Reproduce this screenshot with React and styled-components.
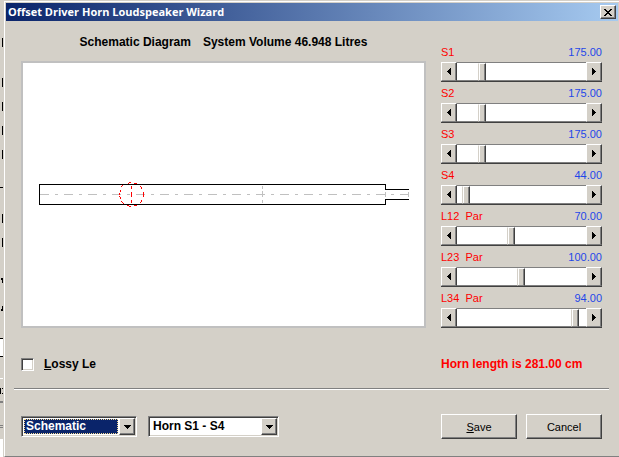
import React, { useState } from "react";
import styled, { createGlobalStyle } from "styled-components";

const GlobalStyle = createGlobalStyle`
  * {
    box-sizing: border-box;
  }
  body {
    margin: 0;
    background-color: #d4d0c8;
    color: #000;
    font-family: "Liberation Sans", Arial, sans-serif;
    font-size: 11px;
  }
`;

const Desktop = styled.div`
  display: flex;
  min-height: 100vh;
`;

const Behind = styled.svg`
  flex: none;
  display: block;
  width: 4px;
  height: 457px;
`;

const Dialog = styled.main`
  flex: 1;
  min-width: 0;
  display: flex;
  flex-direction: column;
  margin-top: 1px;
  border-top: 1px solid #fff;
  border-left: 1px solid #fff;
  border-bottom: 1px solid #808080;
  padding: 1px;
`;

const TitleBar = styled.header`
  display: flex;
  align-items: center;
  justify-content: space-between;
  height: 18px;
  padding: 0 2px;
  background: linear-gradient(to right, #0a246a, #a6caf0);
`;

const Title = styled.h1`
  margin: 0;
  color: #fff;
  font-family: "Open Sans", "Noto Sans", sans-serif;
  font-size: 11px;
  font-weight: 700;
  line-height: 18px;
  white-space: nowrap;
`;

const Raised = styled.button`
  display: flex;
  align-items: center;
  justify-content: center;
  flex: none;
  padding: 0;
  background-color: #d4d0c8;
  color: #000;
  border: 1px solid;
  border-color: #fff #404040 #404040 #fff;
  box-shadow: inset -1px -1px 0 #808080;
`;

const CloseButton = styled(Raised)`
  width: 16px;
  height: 14px;
`;

const Content = styled.div`
  flex: 1;
  display: flex;
  gap: 15px;
  padding: 10px 16px 0 15px;
`;

const DiagramSide = styled.section`
  flex: 1;
  min-width: 0;
`;

const Heading = styled.h2`
  display: flex;
  justify-content: center;
  gap: 12px;
  height: 30px;
  margin: 0;
  font-size: 12px;
  font-weight: 700;
  line-height: 22px;
  white-space: nowrap;
`;

const Canvas = styled.div`
  height: 267px;
  border: 2px solid #c0c0c0;
  background-color: #fff;

  svg {
    display: block;
    width: 100%;
    height: 100%;
  }
`;

const SliderSide = styled.section`
  width: 161px;
  flex: none;
  padding-top: 10px;
`;

const SliderHead = styled.div`
  display: flex;
  justify-content: space-between;
  height: 21px;
  line-height: 22px;
  white-space: pre;
`;

const SliderLabel = styled.label`
  color: #f00;
`;

const SliderValue = styled.output`
  color: #1f47e8;
`;

const ScrollBar = styled.div`
  display: flex;
  height: 20px;
  border-bottom: 1px solid #404040;
`;

const ArrowButton = styled(Raised)`
  width: 16px;
  border-bottom-color: #808080;
  box-shadow: inset -1px 0 0 #808080;
`;

const Range = styled.input`
  flex: 1;
  min-width: 0;
  height: 19px;
  margin: 0;
  appearance: none;
  background-color: #fff;
  border-top: 1px solid #808080;
  border-bottom: 1px solid #808080;

  &::-webkit-slider-thumb {
    appearance: none;
    width: 8px;
    height: 18px;
    background-color: #d4d0c8;
    border: 1px solid;
    border-color: #fff #404040 #808080 #d4d0c8;
    box-shadow: inset 1px 0 0 #fff, inset -1px 0 0 #808080;
  }
`;

const StatusRow = styled.div`
  display: flex;
  align-items: center;
  gap: 15px;
  height: 48px;
  padding: 0 16px 0 15px;
  font-size: 12px;
  font-weight: 700;
`;

const CheckLabel = styled.label`
  flex: 1;
  display: flex;
  align-items: center;
  gap: 10px;
`;

const Checkbox = styled.input`
  width: 13px;
  height: 13px;
  margin: 0;
  appearance: none;
  background-color: #fff;
  border: 1px solid;
  border-color: #808080 #fff #fff #808080;
  box-shadow: inset 1px 1px 0 #404040, inset -1px -1px 0 #d4d0c8;

  &:checked {
    background-color: #0a246a;
  }
`;

const HornLength = styled.p`
  width: 161px;
  margin: 0;
  color: #f00;
  white-space: nowrap;
`;

const Rule = styled.hr`
  width: auto;
  height: 2px;
  margin: 0 9px 0 8px;
  border: 0;
  border-top: 1px solid #808080;
  border-bottom: 1px solid #fff;
`;

const Footer = styled.footer`
  display: flex;
  align-items: center;
  gap: 11px;
  padding: 24px 16px 16px 15px;
`;

const SelectFrame = styled.div`
  display: flex;
  flex: none;
  width: ${({ $wide }) => ($wide ? "131px" : "116px")};
  height: 21px;
  padding: 1px;
  background-color: #fff;
  border: 1px solid;
  border-color: #808080 #fff #fff #808080;
  box-shadow: inset 1px 1px 0 #404040, inset -1px -1px 0 #d4d0c8;
`;

const Select = styled.select`
  flex: 1;
  min-width: 0;
  margin: 1px;
  padding: 0 1px;
  appearance: none;
  border: 1px ${({ $active }) => ($active ? "dotted #f5db95" : "solid #fff")};
  background-color: ${({ $active }) => ($active ? "#0a246a" : "#fff")};
  color: ${({ $active }) => ($active ? "#fff" : "#000")};
  font-family: inherit;
  font-size: 12px;
  font-weight: 700;
  line-height: 13px;
  outline: none;
`;

const DropArrow = styled(Raised)`
  width: 16px;
  pointer-events: none;
`;

const Buttons = styled.div`
  display: flex;
  gap: 9px;
  margin-left: auto;
`;

const PushButton = styled(Raised)`
  width: 76px;
  height: 25px;
  font-family: inherit;
  font-size: 11px;
`;

const sliders = [
  { id: "s1", label: "S1", value: 175, max: 1008 },
  { id: "s2", label: "S2", value: 175, max: 1008 },
  { id: "s3", label: "S3", value: 175, max: 1008 },
  { id: "s4", label: "S4", value: 44, max: 1008 },
  { id: "l12", label: "L12  Par", value: 70, max: 169 },
  { id: "l23", label: "L23  Par", value: 100, max: 202 },
  { id: "l34", label: "L34  Par", value: 94, max: 100 },
];

const BackWindow = () => (
  <Behind viewBox="0 0 4 457" shapeRendering="crispEdges" aria-hidden="true">
    <path d="M0 339h3v17H0zM0 439h3v18H0z" fill="#fff" />
    <path d="M0 378h3v1H0z" fill="#fff" />
    <path
      d="M2 38h1v9H2zM2 78h1v9H2zM2 102h1v9H2zM2 126h1v9H2zM2 150h1v9H2zM0 187h3v1H0zM2 214h1v9H2zM2 238h1v9H2zM1 278h2v2H1zM2 280h1v3H2zM2 306h1v3H2zM1 309h2v2H1zM0 338h3v1H0zM0 356h3v1H0zM0 388h1v6H0zM2 388h1v1H2zM2 393h1v1H2z"
      fill="#000"
    />
    <path d="M0 401h3v2H0zM0 425h3v1H0zM0 427h3v1H0z" fill="#808080" />
  </Behind>
);

const HornDiagram = () => (
  <svg
    viewBox="0 0 401 263"
    shapeRendering="crispEdges"
    fill="none"
    role="img"
    aria-label="Horn schematic"
  >
    <g stroke="#c0c0c0">
      <path d="M17 131.5H386" strokeDasharray="9 6 3 6" />
      <path d="M239.5 123v3M239.5 128v6M239.5 137v3" />
      <path d="M362.5 129v5M385.5 129v5" />
    </g>
    <path
      d="M386 126.5H362.5V121.5H16.5V141.5H362.5V136.5H386"
      stroke="#000"
    />
    {/* driver cone */}
    <g fill="#f00">
      <path d="M106 119h2v1h-2zM105 120h1v1h-1zM111 120h3v1h-3zM99 122h1v1h-1zM98 123h1v1h-1zM117 123h1v1h-1zM118 124h1v2h-1zM97 127h1v2h-1zM96 130h1v2h-1zM96 133h1v1h-1zM97 134h1v2h-1zM120 129h1v5h-1zM118 137h1v2h-1zM117 139h1v1h-1zM98 138h1v1h-1zM99 139h1v1h-1zM100 140h1v1h-1zM104 142h2v1h-2zM106 143h2v1h-2zM111 142h3v1h-3z" />
      <path d="M108 123h1v3h-1zM108 129h1v5h-1zM108 137h1v3h-1z" />
    </g>
  </svg>
);

const ArrowIcon = ({ path, width, height }) => (
  <svg
    width={width}
    height={height}
    viewBox={`0 0 ${width} ${height}`}
    shapeRendering="crispEdges"
    aria-hidden="true"
  >
    <path d={path} fill="#000" />
  </svg>
);

const Slider = ({ slider, onChange }) => {
  const { id, label, value, max } = slider;
  const update = (next) => onChange(id, Math.min(max, Math.max(0, next)));
  return (
    <div>
      <SliderHead>
        <SliderLabel htmlFor={id}>{label}</SliderLabel>
        <SliderValue htmlFor={id}>{value.toFixed(2)}</SliderValue>
      </SliderHead>
      <ScrollBar>
        <ArrowButton
          type="button"
          aria-label={`Decrease ${label}`}
          onClick={() => update(value - 1)}
        >
          <ArrowIcon
            width={4}
            height={7}
            path="M3 0h1v7H3zM2 1h1v5H2zM1 2h1v3H1zM0 3h1v1H0z"
          />
        </ArrowButton>
        <Range
          id={id}
          type="range"
          min="0"
          max={max}
          value={value}
          onChange={(e) => update(Number(e.target.value))}
        />
        <ArrowButton
          type="button"
          aria-label={`Increase ${label}`}
          onClick={() => update(value + 1)}
        >
          <ArrowIcon
            width={4}
            height={7}
            path="M0 0h1v7H0zM1 1h1v5H1zM2 2h1v3H2zM3 3h1v1H3z"
          />
        </ArrowButton>
      </ScrollBar>
    </div>
  );
};

const ComboBox = ({ label, options, wide, active }) => (
  <SelectFrame $wide={wide}>
    <Select aria-label={label} $active={active}>
      {options.map((option) => (
        <option key={option}>{option}</option>
      ))}
    </Select>
    <DropArrow as="span">
      <ArrowIcon
        width={7}
        height={4}
        path="M0 0h7v1H0zM1 1h5v1H1zM2 2h3v1H2zM3 3h1v1H3z"
      />
    </DropArrow>
  </SelectFrame>
);

const App = () => {
  const [values, setValues] = useState(sliders);
  const [lossy, setLossy] = useState(false);

  const changeSlider = (id, value) => {
    setValues(values.map((s) => (s.id === id ? { ...s, value } : s)));
  };

  return (
    <>
      <GlobalStyle />
      <Desktop>
        <BackWindow />
        <Dialog>
          <TitleBar>
            <Title>Offset Driver Horn Loudspeaker Wizard</Title>
            <CloseButton type="button" aria-label="Close">
              <ArrowIcon
                width={8}
                height={7}
                path="M0 0h2v1H0zM6 0h2v1H6zM1 1h2v1H1zM5 1h2v1H5zM2 2h4v1H2zM3 3h2v1H3zM2 4h4v1H2zM1 5h2v1H1zM5 5h2v1H5zM0 6h2v1H0zM6 6h2v1H6z"
              />
            </CloseButton>
          </TitleBar>
          <Content>
            <DiagramSide>
              <Heading>
                <span>Schematic Diagram</span>
                <span>System Volume 46.948 Litres</span>
              </Heading>
              <Canvas>
                <HornDiagram />
              </Canvas>
            </DiagramSide>
            <SliderSide>
              {values.map((slider) => (
                <Slider
                  key={slider.id}
                  slider={slider}
                  onChange={changeSlider}
                />
              ))}
            </SliderSide>
          </Content>
          <StatusRow>
            <CheckLabel>
              <Checkbox
                type="checkbox"
                checked={lossy}
                onChange={(e) => setLossy(e.target.checked)}
              />
              <span>
                <u>L</u>ossy Le
              </span>
            </CheckLabel>
            <HornLength>Horn length is 281.00 cm</HornLength>
          </StatusRow>
          <Rule />
          <Footer>
            <ComboBox label="View" options={["Schematic"]} active />
            <ComboBox label="Segment" options={["Horn S1 - S4"]} wide />
            <Buttons>
              <PushButton type="button">
                <span>
                  <u>S</u>ave
                </span>
              </PushButton>
              <PushButton type="button">Cancel</PushButton>
            </Buttons>
          </Footer>
        </Dialog>
      </Desktop>
    </>
  );
};

export default App;
